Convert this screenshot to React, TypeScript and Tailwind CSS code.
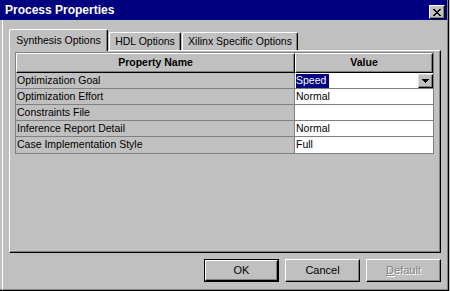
import React from "react";

const rows: { name: string; value: string; select?: boolean }[] = [
  { name: "Optimization Goal", value: "Speed", select: true },
  { name: "Optimization Effort", value: "Normal" },
  { name: "Constraints File", value: "" },
  { name: "Inference Report Detail", value: "Normal" },
  { name: "Case Implementation Style", value: "Full" },
];

function CloseX() {
  const px: [number, number][] = [];
  const pattern = [
    "XX....XX",
    ".XX..XX.",
    "..XXXX..",
    "...XX...",
    "..XXXX..",
    ".XX..XX.",
    "XX....XX",
  ];
  pattern.forEach((r, y) =>
    r.split("").forEach((c, x) => {
      if (c === "X") px.push([x, y]);
    })
  );
  return (
    <svg width="8" height="7" viewBox="0 0 8 7" shapeRendering="crispEdges">
      {px.map(([x, y]) => (
        <rect key={`${x}-${y}`} x={x} y={y} width="1" height="1" fill="#000" />
      ))}
    </svg>
  );
}

function DownTri() {
  return (
    <svg width="7" height="4" viewBox="0 0 7 4" shapeRendering="crispEdges">
      <rect x="0" y="0" width="7" height="1" fill="#000" />
      <rect x="1" y="1" width="5" height="1" fill="#000" />
      <rect x="2" y="2" width="3" height="1" fill="#000" />
      <rect x="3" y="3" width="1" height="1" fill="#000" />
    </svg>
  );
}

export default function App() {
  return (
    <div
      className="w-[450px] h-[291px] bg-[#c0c0c0] overflow-hidden text-black"
      style={{ fontFamily: '"Liberation Sans", Arial, sans-serif' }}
    >
      <div className="w-[449px] h-[291px] border-r border-b border-black shadow-[inset_-1px_-1px_0_#808080] flex flex-col">
        {/* Title bar */}
        <div className="h-[20px] w-[447px] bg-[#000080] flex justify-between pl-[5px] pr-[2px]">
          <span className="text-white font-bold text-[12px] leading-[20px]">Process Properties</span>
          <div className="self-end mb-[1px] w-[16px] h-[14px] bg-[#c0c0c0] border-t border-l border-white border-r border-b border-r-black border-b-black shadow-[inset_-1px_-1px_0_#808080] flex items-center justify-center">
            <CloseX />
          </div>
        </div>

        {/* Body */}
        <div className="flex-1 pl-[2px]">
          <div className="h-full border-l border-white pl-[6px] pt-[9px] text-[10.5px]">
            {/* Tabs */}
            <div className="flex items-end h-[21px]">
              <div className="relative z-10 -mb-px w-[99px] h-[22px] bg-[#c0c0c0] border-t border-l border-white border-r border-r-black shadow-[inset_-1px_0_0_#808080] rounded-tl-[2px] rounded-tr-[2px] flex items-center justify-center">
                Synthesis Options
              </div>
              <div className="w-[72px] h-[18px] ml-px border-t border-l border-white border-r border-r-black shadow-[inset_-1px_0_0_#808080] rounded-tl-[2px] rounded-tr-[2px] flex items-center justify-center">
                HDL Options
              </div>
              <div className="w-[116px] h-[18px] ml-px border-t border-l border-white border-r border-r-black shadow-[inset_-1px_0_0_#808080] rounded-tl-[2px] rounded-tr-[2px] flex items-center justify-center">
                Xilinx Specific Options
              </div>
            </div>

            {/* Panel */}
            <div className="w-[432px] h-[203px] border-t border-l border-white border-r border-b border-r-black border-b-black shadow-[inset_-1px_-1px_0_#808080] pl-[5px] pt-px">
              <div className="w-[419px] border border-[#808080] bg-[#c0c0c0]">
                {/* Header */}
                <div className="flex h-[20px]">
                  <div className="w-[279px] h-full border-t border-l border-white border-r border-b border-r-black border-b-black shadow-[inset_-1px_-1px_0_#808080] flex items-center justify-center font-bold">
                    Property Name
                  </div>
                  <div className="w-[138px] h-full border-t border-l border-white border-r border-b border-r-black border-b-black shadow-[inset_-1px_-1px_0_#808080] flex items-center justify-center font-bold">
                    Value
                  </div>
                </div>
                {rows.map((r, i) => (
                  <div
                    key={r.name}
                    className={`flex h-[16px] ${i < rows.length - 1 ? "border-b border-[#808080]" : "h-[15px]"}`}
                  >
                    <div className="w-[279px] h-full border-r border-[#808080] pl-[1px] flex items-center whitespace-nowrap">
                      {r.name}
                    </div>
                    <div className="w-[138px] h-full bg-white flex items-center justify-between">
                      {r.select ? (
                        <>
                          <span className="ml-[1px] h-[14px] bg-[#000080] text-white pr-[3px] flex items-center">
                            {r.value}
                          </span>
                          <div className="w-[15px] h-[14px] bg-[#c0c0c0] border-t border-l border-[#dfdfdf] border-r border-b border-r-black border-b-black shadow-[inset_-1px_-1px_0_#808080] flex items-center justify-center">
                            <DownTri />
                          </div>
                        </>
                      ) : (
                        <span className="pl-[1px]">{r.value}</span>
                      )}
                    </div>
                  </div>
                ))}
              </div>
            </div>

            {/* Buttons */}
            <div className="w-[432px] mt-[6px] flex justify-end gap-[6px] text-[11px]">
              <div className="w-[75px] h-[23px] border border-black">
                <div className="w-full h-full border-t border-l border-white border-r border-b border-r-black border-b-black shadow-[inset_-1px_-1px_0_#808080] flex items-center justify-center">
                  OK
                </div>
              </div>
              <div className="w-[75px] h-[23px] border-t border-l border-white border-r border-b border-r-black border-b-black shadow-[inset_-1px_-1px_0_#808080] flex items-center justify-center">
                Cancel
              </div>
              <div className="w-[75px] h-[23px] border-t border-l border-white border-r border-b border-r-black border-b-black shadow-[inset_-1px_-1px_0_#808080] flex items-center justify-center text-[#808080] [text-shadow:1px_1px_0_#ffffff]">
                <span>
                  <span className="underline">D</span>efault
                </span>
              </div>
            </div>
          </div>
        </div>
      </div>
    </div>
  );
}
